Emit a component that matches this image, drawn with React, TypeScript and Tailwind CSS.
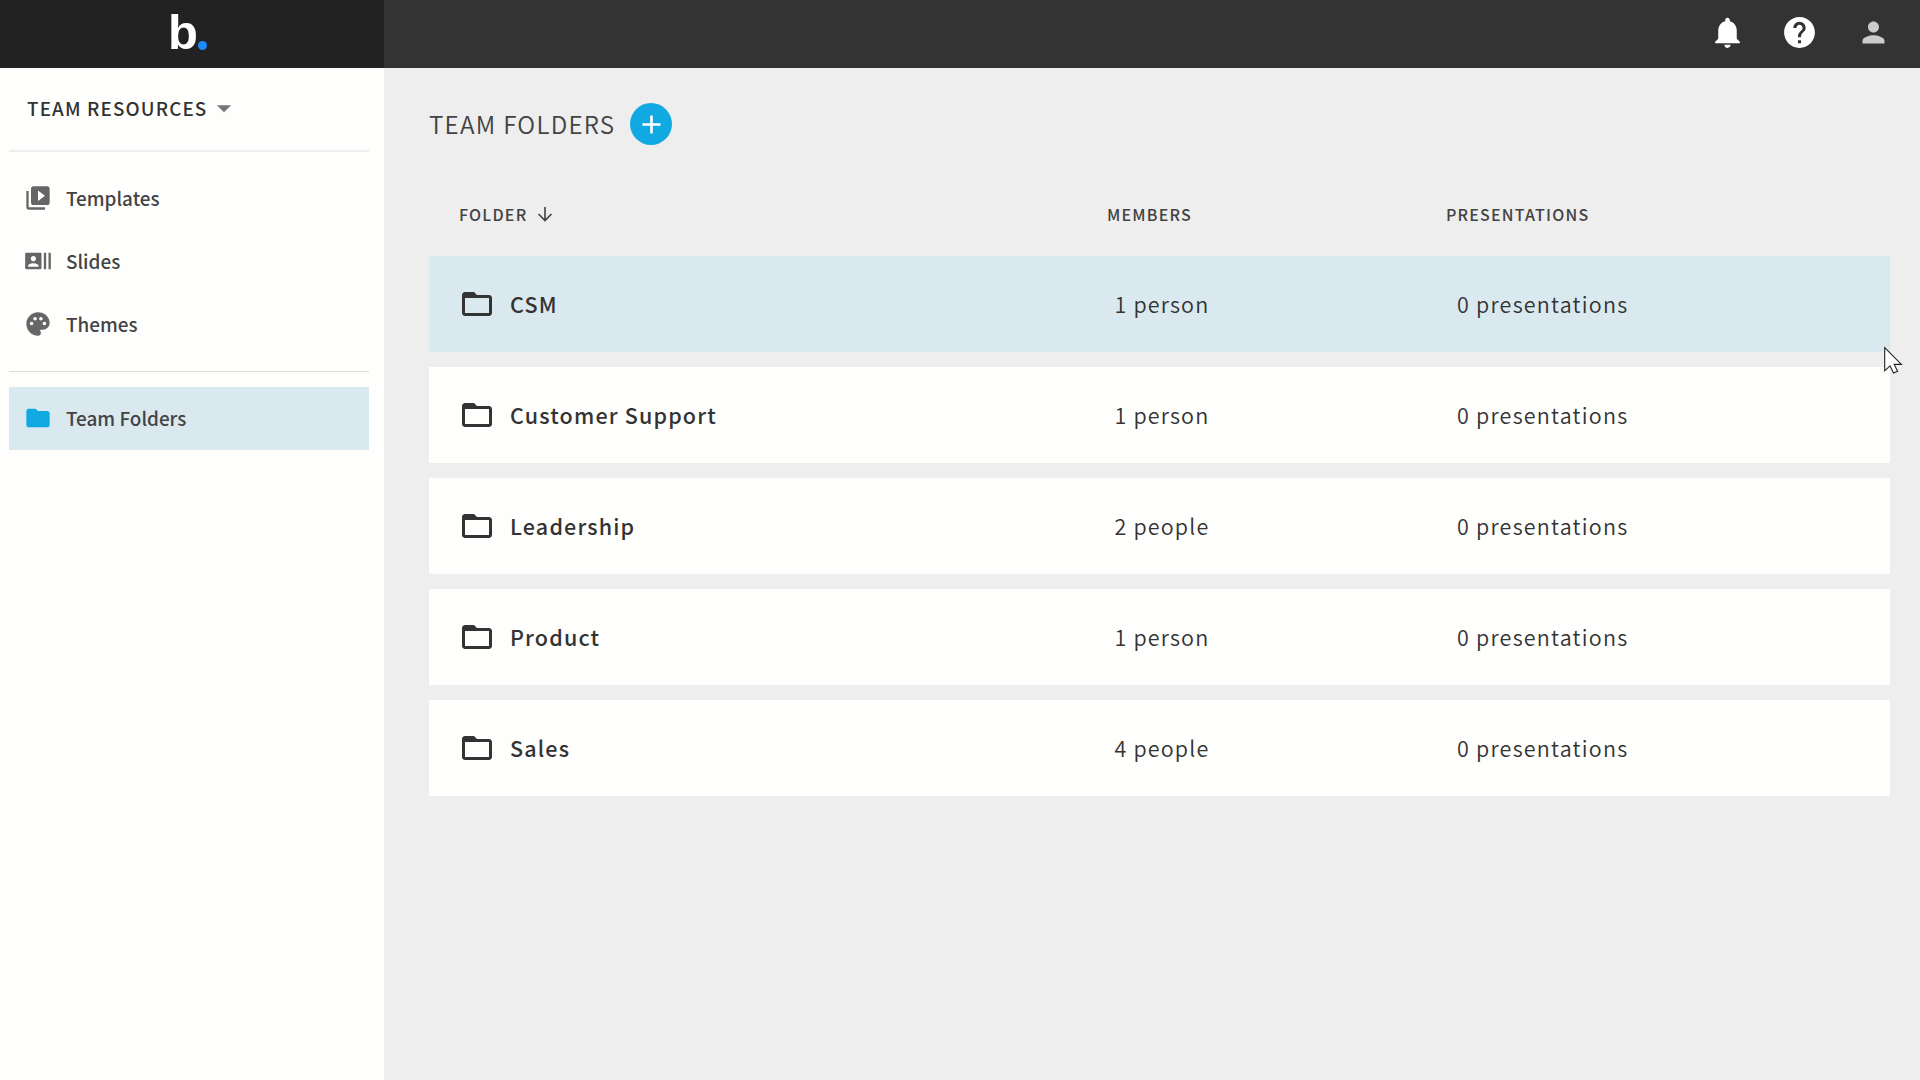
import type { ReactNode } from 'react';
import {
  MdAdd, MdArrowDropDown, MdFolder, MdFolderOpen, MdHelp, MdNotifications,
  MdPalette, MdPerson, MdRecentActors, MdVideoLibrary,
} from 'react-icons/md';

const NAV = [
  { label: 'Templates', icon: <MdVideoLibrary size={28} /> },
  { label: 'Slides',    icon: <MdRecentActors size={28} /> },
  { label: 'Themes',    icon: <MdPalette size={28} /> },
];

const FOLDERS = [
  { name: 'CSM',              members: '1 person', presentations: '0 presentations' },
  { name: 'Customer Support', members: '1 person', presentations: '0 presentations' },
  { name: 'Leadership',       members: '2 people', presentations: '0 presentations' },
  { name: 'Product',          members: '1 person', presentations: '0 presentations' },
  { name: 'Sales',            members: '4 people', presentations: '0 presentations' },
];

function NavItem({ label, icon, active }: { label: string; icon: ReactNode; active?: boolean }) {
  return (
    <a className={`flex items-center h-[63px] pl-[15px] pb-px gap-[14px] ${active ? 'bg-[#dae9f0] text-[#11a9e2]' : 'text-[#666666]'}`}>
      {icon}
      <span className="pb-px text-[18.9px] leading-7 font-medium text-[#434343]">{label}</span>
    </a>
  );
}

function Header() {
  return (
    <header className="flex h-[68px] bg-[#333333]">
      <div className="w-[384px] bg-[#222222] pl-[168px] flex items-end pb-[18px]">
        <span className="font-['Liberation_Sans'] font-bold text-[49px] leading-[35px] text-white">b</span>
        <span className="w-[9px] h-[9px] rounded-full bg-[#1a8cff]" />
      </div>
      <div className="flex-1 flex items-center justify-end pr-[30px] pb-1 text-white">
        <MdNotifications size={37} className="mr-[35px]" />
        <MdHelp size={37} className="mr-[39px]" />
        <MdPerson size={33} className="text-[#cccccc]" />
      </div>
    </header>
  );
}

function Sidebar() {
  return (
    <aside className="w-[384px] bg-[#fefefd] pl-[9px] pr-[15px]">
      <div className="h-[84px] border-b-2 border-[#eeeeee] flex items-center pl-[18px] pb-[2px]">
        <span className="text-[18.8px] leading-7 font-medium tracking-[1.15px] text-[#333333]">TEAM RESOURCES</span>
        <MdArrowDropDown size={34} className="text-[#777777]" />
      </div>
      <nav className="pt-[15px]">
        {NAV.map(n => <NavItem key={n.label} {...n} />)}
        <div className="h-px bg-[#dddddd] my-[15px]" />
        <NavItem label="Team Folders" icon={<MdFolder size={28} />} active />
      </nav>
    </aside>
  );
}

function Cursor() {
  return (
    <svg className="absolute left-[1884px] top-[346px]" width="20" height="30" viewBox="0 0 20 30">
      <path d="M.7 1.500v23.300l5.300-5 3.600 7.300 4-1.800-3.400-6.900h7.200z" fill="#fff" stroke="#222" strokeWidth="1.1" />
    </svg>
  );
}

export default function App() {
  return (
    <div className="relative w-[1920px] h-[1080px] flex flex-col overflow-hidden bg-[#eeeeee] font-['Noto_Sans_CJK_SC',sans-serif]">
      <Header />
      <div className="flex flex-1">
        <Sidebar />
        <main className="flex-1 pl-[45px] pr-[30px] pt-[35px]">
          <div className="flex items-center h-[42px]">
            <h1 className="w-[201px] text-[24.2px] leading-9 font-[350] tracking-[1.25px] text-[#434343] whitespace-nowrap">TEAM FOLDERS</h1>
            <button className="w-[42px] h-[42px] rounded-full bg-[#11a9e2] text-white flex items-center justify-center">
              <MdAdd size={31} />
            </button>
          </div>

          <div className="flex items-center h-[68px] mt-[35px] mb-2 text-[16px] leading-6 font-medium tracking-[1.2px] text-[#434343]">
            <div className="w-[678px] pl-[30px] flex items-center">
              FOLDER
              <svg className="ml-[10px] mb-px" width="16" height="16" viewBox="0 0 16 16" fill="none" stroke="currentColor" strokeWidth="1.6">
                <path d="M8 1v13M1.500 8l6.500 6.500L14.500 8" />
              </svg>
            </div>
            <div className="w-[339px]">MEMBERS</div>
            <div>PRESENTATIONS</div>
          </div>

          <div className="flex flex-col gap-[15px]">
            {FOLDERS.map((f, i) => (
              <div key={f.name} className={`flex items-center h-24 text-[21.5px] leading-8 tracking-[1.16px] text-[#333333] ${i === 0 ? 'bg-[#dae9f0]' : 'bg-[#fefefd]'}`}>
                <div className="w-[685.5px] pl-[30px] flex items-center gap-[15px] font-medium">
                  <MdFolderOpen size={36} />
                  <span className="pb-px">{f.name}</span>
                </div>
                <div className="w-[342.5px] pb-px font-[350]">{f.members}</div>
                <div className="pb-px font-[350] tracking-[1.22px]">{f.presentations}</div>
              </div>
            ))}
          </div>
        </main>
      </div>
      <Cursor />
    </div>
  );
}
